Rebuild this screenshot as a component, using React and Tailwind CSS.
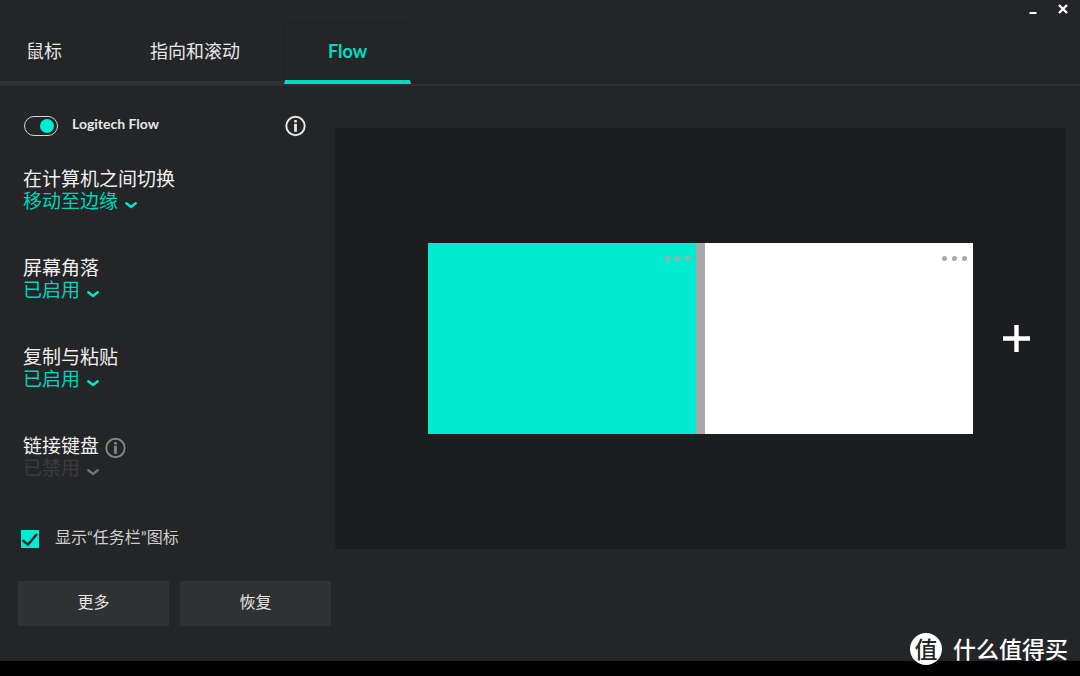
import React, { useState } from "react";

const settings = [
  {
    id: "switch",
    label: "在计算机之间切换",
    options: ["移动至边缘", "按住 Ctrl 并移动至边缘"],
  },
  { id: "corners", label: "屏幕角落", options: ["已启用", "已禁用"] },
  { id: "clipboard", label: "复制与粘贴", options: ["已启用", "已禁用"] },
  {
    id: "keyboard",
    label: "链接键盘",
    options: ["已禁用", "已启用"],
    disabled: true,
    info: true,
  },
];

function InfoIcon({ className }) {
  return (
    <svg viewBox="0 0 22 22" className={className} aria-hidden="true">
      <circle cx="10.5" cy="11" r="9.2" fill="none" stroke="currentColor" strokeWidth="1.9" />
      <rect x="9.1" y="5" width="2.8" height="2.4" rx="0.6" fill="currentColor" />
      <rect x="9.1" y="8.8" width="2.8" height="8" fill="currentColor" />
    </svg>
  );
}

function Chevron({ className }) {
  return (
    <svg viewBox="0 0 12 8" className={className} aria-hidden="true">
      <path
        d="M1.3 2.2 L6 6 L10.7 2.2"
        fill="none"
        stroke="currentColor"
        strokeWidth="2.4"
        strokeLinecap="round"
      />
    </svg>
  );
}

function Setting({ id, label, options, disabled, info }) {
  return (
    <div>
      <div className="flex h-[22px] items-center gap-[6px]">
        <label htmlFor={id} className="text-[19px] leading-[22px] text-[#f0f0f0]">
          {label}
        </label>
        {info && (
          <button aria-label="链接键盘信息" className="mt-1 text-[#858687]">
            <InfoIcon className="size-[22px]" />
          </button>
        )}
      </div>
      {/* The chevron lies over the right padding of the select */}
      <div className="relative w-fit">
        <select
          id={id}
          disabled={disabled}
          className="block h-[22px] field-sizing-content appearance-none bg-transparent pr-[19px] text-[19px] leading-[22px] text-[#00d3bb] opacity-100 outline-none disabled:text-[#3a3b3d]"
        >
          {options.map((option) => (
            <option key={option}>{option}</option>
          ))}
        </select>
        <Chevron
          className={
            disabled
              ? "pointer-events-none absolute right-0 bottom-[3px] h-2 w-3 text-[#737475]"
              : "pointer-events-none absolute right-0 bottom-[3px] h-2 w-3 text-[#00ecd2]"
          }
        />
      </div>
    </div>
  );
}

function Screen({ className, label }) {
  return (
    <div className={`flex aspect-[268/191] items-start justify-end ${className}`}>
      <button aria-label={label} className="flex gap-[5px] px-[6px] py-[13px]">
        <span className="size-[5px] rounded-full bg-[#a9a9a9]" />
        <span className="size-[5px] rounded-full bg-[#a9a9a9]" />
        <span className="size-[5px] rounded-full bg-[#a9a9a9]" />
      </button>
    </div>
  );
}

export default function App() {
  const [flowOn, setFlowOn] = useState(true);
  const [showIcon, setShowIcon] = useState(true);

  return (
    <div className="relative flex min-h-screen flex-col bg-[#242527] font-['Lato','Noto_Sans_CJK_SC',sans-serif] text-[#e8e8e8]">
      {/* Tabs and window controls */}
      <header className="flex items-start justify-between border-b-2 border-[#2d2e30]">
        <nav className="mt-[23px] flex h-[61px] text-lg">
          <button className="border-b-[3px] border-[#2f3032] pr-11 pb-[2px] pl-[26px]">
            鼠标
          </button>
          <button className="border-b-[3px] border-[#2f3032] px-11 pb-[2px]">
            指向和滚动
          </button>
          <button className="border-x border-t border-b-4 border-x-[#202123] border-t-[#202123] border-b-[#00dcc3] px-[43px] pb-[2px] font-bold text-[#00dcc3]">
            Flow
          </button>
        </nav>
        <div className="flex gap-5 pt-1 pr-3">
          <button aria-label="最小化">
            <svg viewBox="0 0 10 10" className="size-[10px]">
              <path d="M1.5 9 H8.5" stroke="#fff" strokeWidth="2" />
            </svg>
          </button>
          <button aria-label="关闭">
            <svg viewBox="0 0 10 10" className="size-[10px]">
              <path d="M1 1 L9 9 M9 1 L1 9" stroke="#fff" strokeWidth="2.4" />
            </svg>
          </button>
        </div>
      </header>

      <main className="flex flex-1 pr-[14px]">
        {/* Settings */}
        <section className="w-[335px] shrink-0 pt-7 pr-1 pl-[18px]">
          <div className="flex items-center justify-between pr-6 pl-[6px]">
            <div className="flex items-center gap-[14px]">
              <input
                id="flow"
                type="checkbox"
                role="switch"
                checked={flowOn}
                onChange={(e) => setFlowOn(e.target.checked)}
                className="flex h-5 w-[34px] appearance-none items-center rounded-full border border-[#d5d5d5] px-[3px] before:size-[14px] before:rounded-full before:bg-[#8a8b8c] checked:justify-end checked:before:bg-[#00ecd2]"
              />
              <label htmlFor="flow" className="pb-1 text-sm leading-5 font-bold">
                Logitech Flow
              </label>
            </div>
            <button aria-label="Flow 信息">
              <InfoIcon className="size-[22px]" />
            </button>
          </div>

          <div className="mt-[30px] flex flex-col gap-[45px] pl-[5px]">
            {settings.map((item) => (
              <Setting key={item.id} {...item} />
            ))}
          </div>

          <div className="mt-12 flex items-center gap-4 pl-[3px]">
            <div className="relative size-[18px]">
              <input
                id="tray"
                type="checkbox"
                checked={showIcon}
                onChange={(e) => setShowIcon(e.target.checked)}
                className="block size-[18px] appearance-none border border-[#00ecd2] checked:bg-[#00ecd2]"
              />
              {showIcon && (
                <svg
                  viewBox="0 0 18 18"
                  className="pointer-events-none absolute inset-0 size-[18px]"
                >
                  <path
                    d="M1.6 10.3 L7 14.6 L16 4"
                    fill="none"
                    stroke="#242527"
                    strokeWidth="2.4"
                  />
                </svg>
              )}
            </div>
            <label htmlFor="tray" className="pb-1 text-base leading-5 text-[#cfcfcf]">
              显示“任务栏”图标
            </label>
          </div>

          <div className="mt-[30px] grid grid-cols-2 gap-[11px]">
            <button className="h-[45px] bg-[#303133] pb-1 text-base">更多</button>
            <button className="h-[45px] bg-[#303133] pb-1 text-base">恢复</button>
          </div>
        </section>

        {/* Computer arrangement */}
        <section className="mt-[42px] mb-28 grid flex-1 grid-cols-[93fr_545fr_93fr] items-center bg-[#1c1d1f]">
          <div className="col-start-2 grid grid-cols-[1fr_9px_1fr]">
            <Screen label="第一台计算机选项" className="bg-[#00ecd2]" />
            <div className="bg-[#a9a9a9]" />
            <Screen label="第二台计算机选项" className="bg-white" />
          </div>
          <button aria-label="添加计算机" className="ml-[30px] w-fit">
            <svg viewBox="0 0 28 28" className="size-7">
              <path d="M0 13.5 H27 M13.5 0 V27" stroke="#fff" strokeWidth="4.4" />
            </svg>
          </button>
        </section>
      </main>

      <footer className="h-[15px] bg-black" />

      {/* Watermark */}
      <div className="absolute right-3 bottom-[11px] flex items-center gap-[11px] text-white">
        <span className="flex size-8 items-center justify-center rounded-full bg-white text-[23px] leading-8 font-medium text-[#242527]">
          值
        </span>
        <span className="text-[23px] leading-8 font-medium">什么值得买</span>
      </div>
    </div>
  );
}
